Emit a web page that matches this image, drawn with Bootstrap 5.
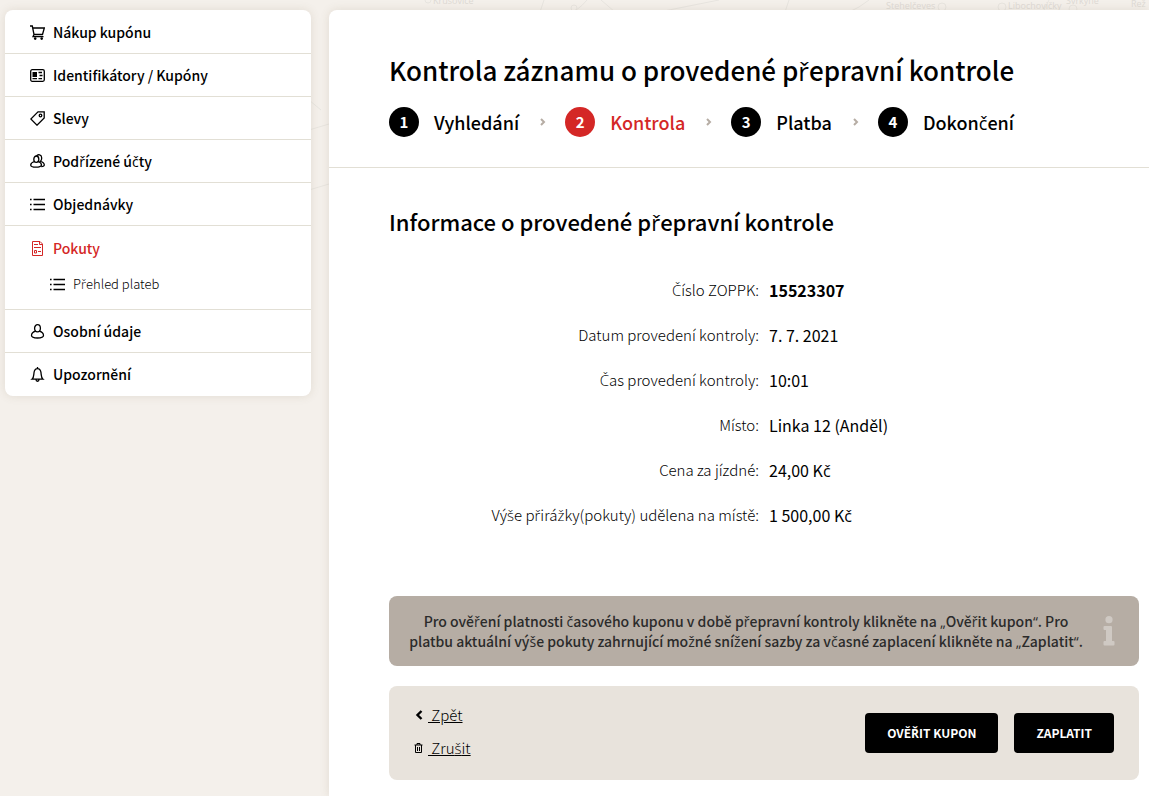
<!DOCTYPE html>
<html lang="cs">
<head>
<meta charset="utf-8">
<meta name="viewport" content="width=device-width, initial-scale=1">
<title>Kontrola záznamu o provedené přepravní kontrole</title>
<link href="https://cdn.jsdelivr.net/npm/bootstrap@5.3.0/dist/css/bootstrap.min.css" rel="stylesheet">
<style>
  :root { --red: #d42726; --line: #e2dfd5; --sand: #e8e3dc; --taupe: #b6ada4; --shadow: 0 0 10px rgba(120, 100, 70, .15); }
  body { background: #f4f0eb; color: #000; font: 15px/20px "Noto Sans CJK SC", "Open Sans", sans-serif; }
  a { color: inherit; }
  /* letters with a caron and Czech quotes, which the CJK family lacks */
  .alt-glyph { font-family: "Open Sans", sans-serif; line-height: 1; }
  .map-bg { position: absolute; top: 0; right: 0; z-index: -1; }
  .map-bg text { font-family: "Open Sans", sans-serif; font-size: 9px; fill: #dedad5; stroke: none; }
  .page { min-height: 100vh; padding: 10px 0 0 5px; gap: 18px; }
  .side { flex: 0 0 306px; border-radius: 8px; box-shadow: var(--shadow); padding: 1px 0; }
  .side-item { border-bottom: 1px solid var(--line); padding: 11px 25px; }
  .side-item:last-child { border-bottom: 0; }
  .side-link { display: flex; align-items: center; gap: 8px; font-size: 14px; font-weight: 500; text-decoration: none; }
  .side-link svg { width: 15px; height: 15px; flex: none; fill: none; stroke: currentColor; stroke-width: 1.3; }
  .side-link svg.fine { stroke-width: 1; }
  .side-link.current { color: var(--red); padding-top: 1px; }
  .side-link.sub { font-size: 13px; font-weight: 300; margin: 16px 0 4px 20px; }
  .main-panel { border-top-left-radius: 8px; box-shadow: var(--shadow); min-width: 0; }
  .main-head { border-bottom: 1px solid var(--line); padding: 42px 10px 30px 60px; }
  .main-body { padding: 35px 10px 16px 60px; }
  h1 { font-size: 26px; line-height: 36px; font-weight: 500; margin: 0 0 19px; }
  h2 { font-size: 22px; line-height: 36px; font-weight: 500; margin: 0 0 41px; }
  .steps { font-size: 18px; font-weight: 500; line-height: 30px; }
  .step-no { width: 30px; height: 30px; border-radius: 50%; background: #000; color: #fff; font-size: 15px; font-weight: 700; text-align: center; margin-right: 15px; }
  .current .step-no { background: var(--red); }
  .steps .current { color: var(--red); }
  .step-sep { width: 6px; height: 10px; margin: 0 19px 0 21px; fill: none; stroke: var(--taupe); stroke-width: 2; }
  .facts { margin-bottom: 46px; }
  .facts dt, .facts dd { line-height: 20px; margin: 0 0 25px; padding: 0 5px; }
  .facts dt { font-weight: 300; text-align: right; }
  .facts dd { font-size: 16px; }
  .notice { background: var(--taupe); color: #2b2b2b; border-radius: 8px; padding: 15px 24px 15px 14px; font-size: 14px; font-weight: 500; text-align: center; gap: 14px; margin-bottom: 20px; }
  .notice svg { width: 12px; height: 30px; flex: none; fill: #cfc9c3; }
  .actions { background: var(--sand); border-radius: 8px; padding: 19px 25px 20px; }
  .back-links { gap: 13px; padding-bottom: 2px; }
  .back-links a { display: flex; align-items: center; gap: 4px; font-weight: 300; text-decoration: none; }
  .back-links span { text-decoration: underline; }
  .back-links svg { width: 10px; height: 12px; fill: none; stroke: #000; }
  .btn-flat { background: #000; color: #fff; border: 0; border-radius: 4px; height: 40px; padding: 0 22px; font-size: 12px; font-weight: 700; text-transform: uppercase; }
  .btn-flat:hover { background: var(--red); color: #fff; }
</style>
</head>
<body>
<svg class="map-bg" width="840" height="300" fill="none" stroke="#e8e5e0" aria-hidden="true">
  <path d="M235 0l-4 12M278 0q-10 12-18 12M292 0l14 12M410 0q-40 8-60 12M480 0l-4 12M560 0q-10 8-20 12M740 0l-6 12M0 100l12 10M0 130l20-6M0 190l20-6"/>
  <circle cx="119" cy="0" r="3"/><circle cx="265" cy="8" r="3"/><circle cx="633" cy="7" r="4"/><circle cx="693" cy="7" r="4"/><circle cx="764" cy="9" r="4"/>
  <text x="124" y="4">Krušovice</text><text x="577" y="9">Stehelčeves</text><text x="699" y="9">Libochovičky</text><text x="757" y="4">Svrkyně</text><text x="822" y="7">Řež</text>
</svg>
<div class="page d-flex">
  <nav class="side bg-white align-self-start" aria-label="Hlavní nabídka">
    <ul class="list-unstyled mb-0">
      <li class="side-item"><a class="side-link" href="#"><svg viewBox="0 0 15 15"><path d="M0 1h2.300l1.700 8.500h8.500L14.300 3H2.900M4 9.500 3 11.700h10.500"/><g fill="currentColor" stroke="none"><circle cx="5.200" cy="13.600" r="1.300"/><circle cx="11.700" cy="13.600" r="1.300"/></g></svg><span>Nákup kupónu</span></a></li>
      <li class="side-item"><a class="side-link" href="#"><svg viewBox="0 0 15 15"><rect x=".7" y="1.700" width="13.600" height="11.600" rx="1.500"/><path d="M2.500 4h4.500v5H2.500z" fill="currentColor" stroke="none"/><path d="M8.500 4.500h3.500M9.500 7.500h3M2.500 10.700h4.500M8.500 10.700h3.500"/></svg><span>Identifikátory / Kupóny</span></a></li>
      <li class="side-item"><a class="side-link" href="#"><svg viewBox="0 0 15 15"><path d="M8 .8h6.200v6.200L7 14.200.8 8z"/><circle cx="10.500" cy="4.500" r="1.300"/></svg><span>Slevy</span></a></li>
      <li class="side-item"><a class="side-link" href="#"><svg viewBox="0 0 15 15"><ellipse cx="6.300" cy="5.200" rx="2.500" ry="3.200"/><path d="M4.500 7.500C1.500 8.500.7 9.600.7 11c0 2.900 10.800 2.900 10.800 0 0-1.400-.8-2.500-3.500-3.500M6.500 2c1.500-2.200 5.200-1.200 5.200 2 0 1.500-.3 2.500-1.200 3.300 2.800.8 3.800 2 3.800 3.700 0 1-1.300 1.500-3 1.700"/></svg><span>Podřízené účty</span></a></li>
      <li class="side-item"><a class="side-link" href="#"><svg viewBox="0 0 15 15"><path d="M0 2.500h1.600M3.500 2.500H15M0 7.500h1.600M3.500 7.500H15M0 12.500h1.600M3.500 12.500H15"/></svg><span>Objednávky</span></a></li>
      <li class="side-item"><a class="side-link current" href="#"><svg class="fine" viewBox="0 0 15 15"><path d="M2.500.5h7.500L12.500 3v11.500h-10zM9.500.5v3h3M4 3.500h4M4 6.500h7M4.500 9.500h2v2.500h-2zM8 10.500h3"/></svg><span>Pokuty</span></a>
        <a class="side-link sub" href="#"><svg viewBox="0 0 15 15"><path d="M0 2.500h1.600M3.500 2.500H15M0 7.500h1.600M3.500 7.500H15M0 12.500h1.600M3.500 12.500H15"/></svg><span>Přehled plateb</span></a></li>
      <li class="side-item"><a class="side-link" href="#"><svg viewBox="0 0 15 15"><ellipse cx="7.500" cy="4.300" rx="2.900" ry="3.600"/><path d="M5.500 7.200C2.500 8.200 1.500 9.500 1.500 11.500c0 3.300 12 3.300 12 0 0-2-1-3.300-4-4.300"/></svg><span>Osobní údaje</span></a></li>
      <li class="side-item"><a class="side-link" href="#"><svg viewBox="0 0 15 15"><path d="M7.500 0v1.500M2 12.200h11c-2-1.700-1.700-4-2-6.500C10.700 3 9.500 1.600 7.500 1.600S4.300 3 4 5.700c-.3 2.500 0 4.800-2 6.500zM6 12.500c0 2.300 3 2.300 3 0"/></svg><span>Upozornění</span></a></li>
    </ul>
  </nav>
  <main class="main-panel bg-white flex-grow-1">
    <header class="main-head">
      <h1>Kontrola záznamu o provedené přepravní kontrole</h1>
      <ol class="steps list-unstyled d-flex flex-wrap align-items-center mb-0">
        <li class="d-flex align-items-center"><span class="step-no">1</span><span>Vyhledání</span><svg class="step-sep" viewBox="0 0 6 10"><path d="M1 2l3 3-3 3"/></svg></li>
        <li class="d-flex align-items-center current" aria-current="step"><span class="step-no">2</span><span>Kontrola</span><svg class="step-sep" viewBox="0 0 6 10"><path d="M1 2l3 3-3 3"/></svg></li>
        <li class="d-flex align-items-center"><span class="step-no">3</span><span>Platba</span><svg class="step-sep" viewBox="0 0 6 10"><path d="M1 2l3 3-3 3"/></svg></li>
        <li class="d-flex align-items-center"><span class="step-no">4</span><span>Dokončení</span></li>
      </ol>
    </header>
    <div class="main-body">
      <h2>Informace o provedené přepravní kontrole</h2>
      <dl class="facts row gx-0">
        <dt class="col-6">Číslo ZOPPK:</dt><dd class="col-6 fw-bold">15523307</dd>
        <dt class="col-6">Datum provedení kontroly:</dt><dd class="col-6">7. 7. 2021</dd>
        <dt class="col-6">Čas provedení kontroly:</dt><dd class="col-6">10:01</dd>
        <dt class="col-6">Místo:</dt><dd class="col-6">Linka 12 (Anděl)</dd>
        <dt class="col-6">Cena za jízdné:</dt><dd class="col-6">24,00 Kč</dd>
        <dt class="col-6">Výše přirážky(pokuty) udělena na místě:</dt><dd class="col-6">1 500,00 Kč</dd>
      </dl>
      <div class="notice d-flex align-items-center">
        <p class="flex-grow-1 mb-0">Pro ověření platnosti časového kuponu v době přepravní kontroly klikněte na „Ověřit kupon“. Pro platbu aktuální výše pokuty zahrnující možné snížení sazby za včasné zaplacení klikněte na „Zaplatit“.</p>
        <svg viewBox="0 0 12 30"><circle cx="6" cy="3.700" r="3.600"/><path d="M1.500 10h6.500q1 0 1 1v14h1.500q1 0 1 1v2.500q0 1-1 1h-9q-1 0-1-1V26q0-1 1-1H3V14H1.500q-1 0-1-1v-2q0-1 1-1z"/></svg>
      </div>
      <div class="actions d-flex align-items-center justify-content-between">
        <div class="back-links d-flex flex-column align-items-start">
          <a href="#"><svg viewBox="0 0 10 12"><path d="M7.500 2 3.500 6l4 4" stroke-width="2.400"/></svg><span>&nbsp;Zpět</span></a>
          <a href="#"><svg viewBox="0 0 10 12"><path d="M.5 3h8M3 3V1.500h3V3M1.500 3v7.500h6V3M3.500 5v4M5.500 5v4"/></svg><span>&nbsp;Zrušit</span></a>
        </div>
        <div class="d-flex gap-3">
          <button class="btn btn-flat" type="button">Ověřit kupon</button>
          <button class="btn btn-flat" type="button">Zaplatit</button>
        </div>
      </div>
    </div>
  </main>
</div>
<script src="https://cdn.jsdelivr.net/npm/bootstrap@5.3.0/dist/js/bootstrap.bundle.min.js"></script>
<script>
  // Give the letters missing from the main family their own font.
  const walker = document.createTreeWalker(document.querySelector('.page'), NodeFilter.SHOW_TEXT);
  const found = [];
  while (walker.nextNode()) found.push(walker.currentNode);
  for (const node of found) {
    const parts = node.data.split(/([čřšžČŘŠŽ„“]+)/);
    if (parts.length === 1) continue;
    node.replaceWith(...parts.map((part, i) => {
      if (i % 2 === 0) return part;
      const span = document.createElement('span');
      span.className = 'alt-glyph';
      span.textContent = part;
      return span;
    }));
  }
</script>
</body>
</html>
